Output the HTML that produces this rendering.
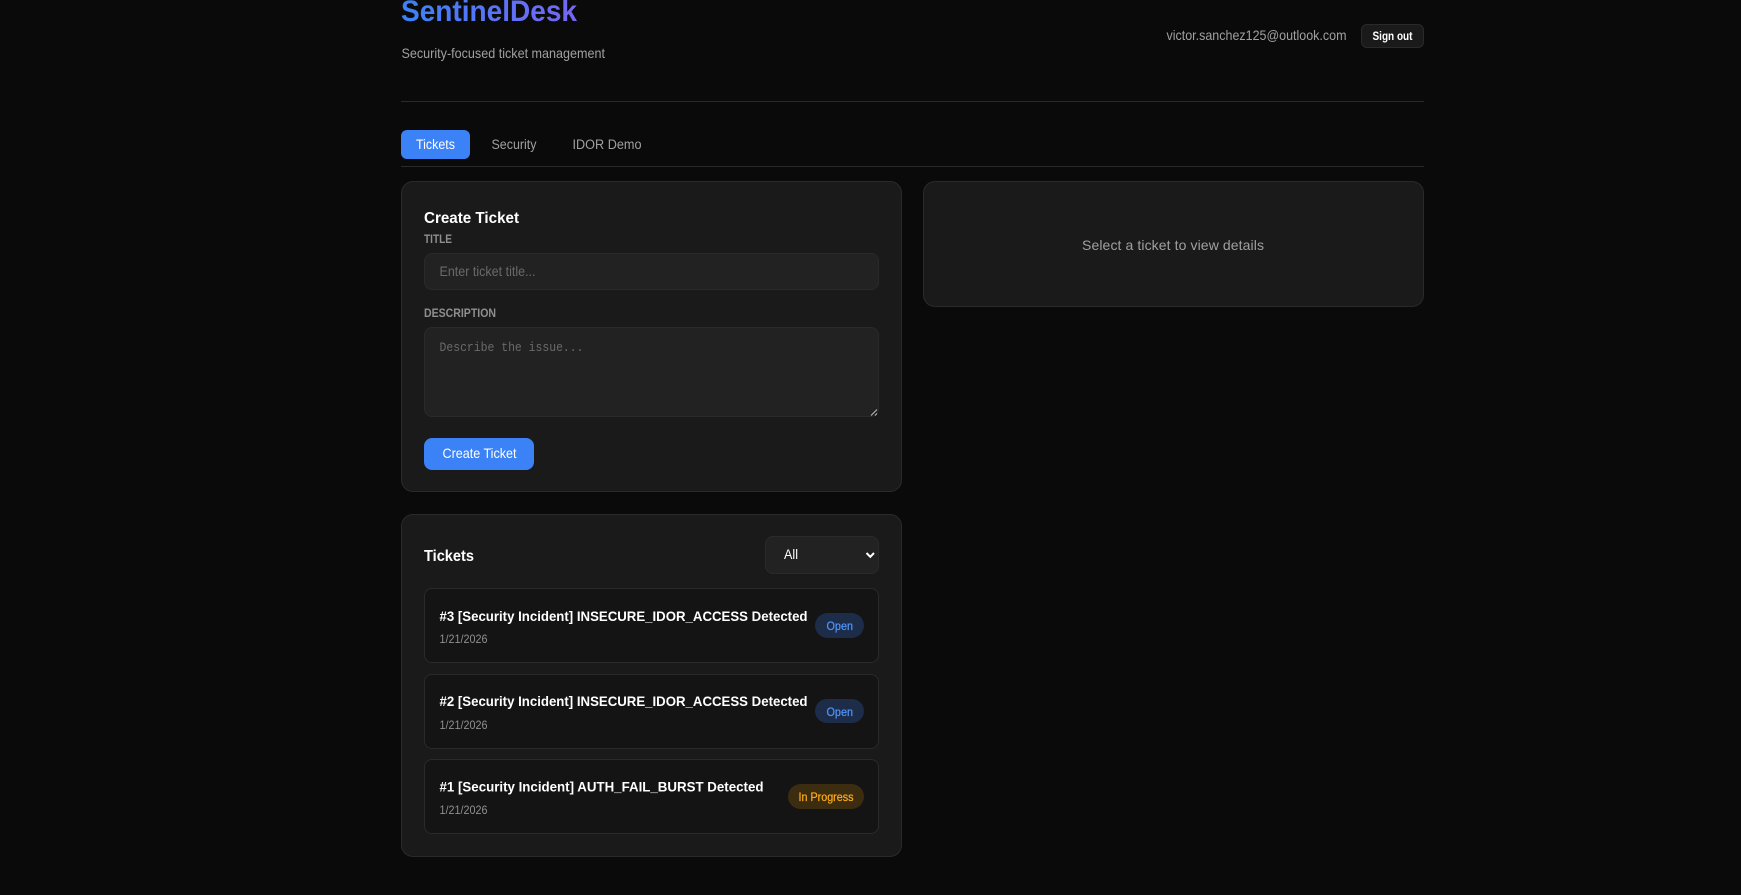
<!DOCTYPE html>
<html lang="en">
<head>
<meta charset="utf-8">
<title>SentinelDesk</title>
<style>
html,body{margin:0;padding:0;width:1741px;height:895px;overflow:hidden;background:#0a0a0a}
.b{position:absolute;box-sizing:border-box}
.card{background:#1a1a1a;border:1px solid #2a2a2a;border-radius:12px}
.field{background:#222;border:1px solid #2a2a2a;border-radius:8px}
.row{left:424px;width:455px;background:#141414;border:1px solid #2a2a2a;border-radius:8px}
svg{position:absolute;left:0;top:0}
text{font-family:"Liberation Sans",Arial,sans-serif;font-size:14px;fill:#a0a0a0}
.w{fill:#fff}
.s{font-weight:700;fill:#fff}
.lab{font-size:11.5px;font-weight:700;fill:#8f8f8f}
.ph{fill:#6a6a6a}
.d{font-size:12px;fill:#8f8f8f}
.bd{font-size:12px;stroke-width:.25px}
</style>
</head>
<body>
<div class="b" style="left:401px;top:101px;width:1023px;height:1px;background:#2a2a2a"></div>
<div class="b" style="left:401px;top:166px;width:1023px;height:1px;background:#2a2a2a"></div>
<div class="b" style="left:1361px;top:24px;width:63px;height:24px;background:#1a1a1a;border:1px solid #2a2a2a;border-radius:6px"></div>
<div class="b" style="left:401px;top:130px;width:69px;height:29px;background:#3b82f6;border-radius:6px"></div>

<div class="b card" style="left:401px;top:181px;width:501px;height:311px"></div>
<div class="b card" style="left:923px;top:181px;width:501px;height:126px"></div>
<div class="b card" style="left:401px;top:514px;width:501px;height:343px"></div>

<div class="b field" style="left:424px;top:253px;width:455px;height:37px"></div>
<div class="b field" style="left:424px;top:327px;width:455px;height:90px"></div>
<div class="b" style="left:424px;top:438px;width:110px;height:32px;background:#3b82f6;border-radius:8px"></div>
<div class="b field" style="left:765px;top:536px;width:114px;height:38px"></div>

<div class="b row" style="top:588px;height:75px"></div>
<div class="b row" style="top:674px;height:75px"></div>
<div class="b row" style="top:759px;height:75px"></div>

<div class="b" style="left:815px;top:613px;width:49px;height:25px;background:#1c2c49;border-radius:13px"></div>
<div class="b" style="left:815px;top:699px;width:49px;height:24px;background:#1c2c49;border-radius:13px"></div>
<div class="b" style="left:788px;top:784px;width:76px;height:25px;background:#3c2c10;border-radius:13px"></div>

<svg width="1741" height="895" viewBox="0 0 1741 895" xmlns="http://www.w3.org/2000/svg">
<defs>
<linearGradient id="g" gradientUnits="userSpaceOnUse" x1="401" y1="0" x2="640" y2="0">
<stop offset="0" stop-color="#3b82f6"/><stop offset="1" stop-color="#8b5cf6"/>
</linearGradient>
</defs>
<text x="401" y="21" textLength="176" lengthAdjust="spacingAndGlyphs" style="font-size:30px;font-weight:700;fill:url(#g)">SentinelDesk</text>
<text x="401.5" y="58" textLength="203.5" lengthAdjust="spacingAndGlyphs">Security-focused ticket management</text>
<text x="1166.5" y="40" textLength="180" lengthAdjust="spacingAndGlyphs">victor.sanchez125@outlook.com</text>
<text x="1372.5" y="40" textLength="40" lengthAdjust="spacingAndGlyphs" class="s" style="font-size:12px">Sign out</text>

<text x="416" y="149" textLength="39" lengthAdjust="spacingAndGlyphs" class="w" style="font-size:13.5px">Tickets</text>
<text x="491.5" y="149" textLength="45" lengthAdjust="spacingAndGlyphs" style="font-size:13.5px">Security</text>
<text x="572.5" y="149" textLength="69" lengthAdjust="spacingAndGlyphs" style="font-size:13.5px">IDOR Demo</text>

<text x="424" y="223" textLength="95" lengthAdjust="spacingAndGlyphs" class="s" style="font-size:16px">Create Ticket</text>
<text x="424" y="243" textLength="28" lengthAdjust="spacingAndGlyphs" class="lab">TITLE</text>
<text x="439.5" y="276" textLength="96" lengthAdjust="spacingAndGlyphs" class="ph">Enter ticket title...</text>
<text x="424" y="317" textLength="72" lengthAdjust="spacingAndGlyphs" class="lab">DESCRIPTION</text>
<text x="439.5" y="351" textLength="144" lengthAdjust="spacingAndGlyphs" class="ph" style="font-family:'Liberation Mono',monospace;font-size:13.33px">Describe the issue...</text>
<path d="M871 415.500L877 409.500M875 415.500L877 413.500" stroke="#bdbdbd" stroke-width="1" fill="none"/>
<text x="442.5" y="458" textLength="74" lengthAdjust="spacingAndGlyphs" class="w">Create Ticket</text>

<text x="424" y="561" textLength="50" lengthAdjust="spacingAndGlyphs" class="s" style="font-size:16px">Tickets</text>
<text x="784" y="559" textLength="14" lengthAdjust="spacingAndGlyphs" class="w">All</text>
<path d="M866.5 553L870.3 556.800L874 553" stroke="#fff" stroke-width="2" fill="none"/>

<text x="439.5" y="621" textLength="368" lengthAdjust="spacingAndGlyphs" class="s">#3 [Security Incident] INSECURE_IDOR_ACCESS Detected</text>
<text x="439.5" y="643" textLength="48" lengthAdjust="spacingAndGlyphs" class="d">1/21/2026</text>
<text x="826.5" y="630" textLength="26.500" lengthAdjust="spacingAndGlyphs" class="bd" style="fill:#4f93f8;stroke:#4f93f8">Open</text>

<text x="439.5" y="706" textLength="368" lengthAdjust="spacingAndGlyphs" class="s">#2 [Security Incident] INSECURE_IDOR_ACCESS Detected</text>
<text x="439.5" y="729" textLength="48" lengthAdjust="spacingAndGlyphs" class="d">1/21/2026</text>
<text x="826.5" y="716" textLength="26.500" lengthAdjust="spacingAndGlyphs" class="bd" style="fill:#4f93f8;stroke:#4f93f8">Open</text>

<text x="439.5" y="791.500" textLength="324" lengthAdjust="spacingAndGlyphs" class="s">#1 [Security Incident] AUTH_FAIL_BURST Detected</text>
<text x="439.5" y="814" textLength="48" lengthAdjust="spacingAndGlyphs" class="d">1/21/2026</text>
<text x="798.5" y="801" textLength="55" lengthAdjust="spacingAndGlyphs" class="bd" style="fill:#fbab1a;stroke:#fbab1a">In Progress</text>

<text x="1082" y="250" textLength="182" lengthAdjust="spacing">Select a ticket to view details</text>
</svg>
</body>
</html>
